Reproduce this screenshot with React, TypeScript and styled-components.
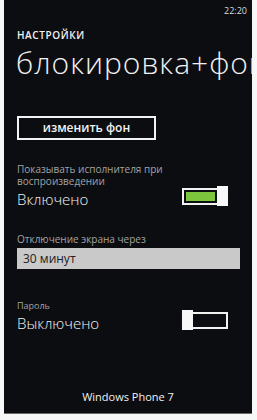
import styled, { createGlobalStyle } from 'styled-components';

const GlobalStyle = createGlobalStyle`
  html, body {
    margin: 0;
    padding: 0;
    background: #f7f7f7;
  }
  body {
    font-family: 'Open Sans', 'Noto Sans', sans-serif;
  }
`;

const Screen = styled.div`
  box-sizing: border-box;
  margin-left: 4px;
  width: 248px;
  height: 414px;
  background: #0b0d11;
  color: #f2f2f2;
  display: flex;
  flex-direction: column;
  padding: 0 12px 9px 13px;
  overflow: hidden;
  border-bottom: 1px solid #6a6a6a;
`;

const StatusBar = styled.div`
  display: flex;
  justify-content: flex-end;
  margin-right: -7px;
  padding-top: 5px;
  font-size: 9px;
  line-height: 12px;
  color: #d8d8d8;
`;

const AppLabel = styled.div`
  margin-top: 12px;
  font-size: 10px;
  line-height: 12px;
  font-weight: 600;
  letter-spacing: 0.6px;
`;

const PageTitle = styled.h1`
  margin: 5px -20px 0 -1px;
  font-size: 30px;
  line-height: 34px;
  font-weight: 300;
  letter-spacing: 1px;
  white-space: nowrap;
  overflow: hidden;
`;

const OutlineButton = styled.button`
  box-sizing: border-box;
  margin-top: 36px;
  width: 139px;
  height: 24px;
  border: 2px solid #f2f2f2;
  background: transparent;
  color: #f2f2f2;
  font-family: inherit;
  font-size: 12px;
  font-weight: 600;
  line-height: 18px;
  padding: 0;
`;

const Setting = styled.section<{ $gap: number }>`
  margin-top: ${(p) => p.$gap}px;
  display: flex;
  flex-direction: column;
`;

const Caption = styled.div<{ $small?: boolean }>`
  font-size: ${(p) => (p.$small ? 9 : 10)}px;
  line-height: 12px;
  color: #a3a3a3;
`;

const ValueRow = styled.div<{ $gap: number }>`
  margin-top: ${(p) => p.$gap}px;
  display: flex;
  justify-content: space-between;
  align-items: flex-start;
`;

const Value = styled.div`
  font-size: 15px;
  line-height: 20px;
  font-weight: 300;
`;

const Toggle = styled.div`
  display: flex;
  align-items: center;
  margin: -3px 12px 0 0;
  width: 46px;
  height: 20px;
`;

const Track = styled.div<{ $on: boolean }>`
  box-sizing: border-box;
  flex: 1;
  height: 17px;
  border: 2px solid #f2f2f2;
  padding: 2px;
  display: flex;
  order: ${(p) => (p.$on ? 0 : 1)};
  ${(p) => (p.$on ? 'margin-right: -2px;' : 'margin-left: -2px;')}
`;

const Fill = styled.div`
  flex: 1;
  background: #7dc53c;
`;

const Thumb = styled.div`
  width: 11px;
  height: 20px;
  background: #f7f7f7;
  position: relative;
`;

const Picker = styled.div`
  box-sizing: border-box;
  margin-top: 3px;
  height: 21px;
  background: #c9c9c9;
  color: #202020;
  font-size: 12px;
  line-height: 21px;
  padding-left: 6px;
`;

const Footer = styled.div`
  margin-top: auto;
  text-align: center;
  font-size: 11px;
  line-height: 14px;
  margin-left: -1px;
`;

function Switch({ on }: { on: boolean }) {
  return (
    <Toggle>
      <Track $on={on}>{on && <Fill />}</Track>
      <Thumb />
    </Toggle>
  );
}

export default function App() {
  return (
    <>
      <GlobalStyle />
      <Screen>
        <StatusBar>22:20</StatusBar>
        <AppLabel>НАСТРОЙКИ</AppLabel>
        <PageTitle>блокировка+фон</PageTitle>
        <OutlineButton>изменить фон</OutlineButton>

        <Setting $gap={23}>
          <Caption>
            Показывать исполнителя при
            <br />
            воспроизведении
          </Caption>
          <ValueRow $gap={2}>
            <Value>Включено</Value>
            <Switch on />
          </ValueRow>
        </Setting>

        <Setting $gap={24}>
          <Caption>Отключение экрана через</Caption>
          <Picker>30 минут</Picker>
        </Setting>

        <Setting $gap={31}>
          <Caption $small>Пароль</Caption>
          <ValueRow $gap={1}>
            <Value>Выключено</Value>
            <Switch on={false} />
          </ValueRow>
        </Setting>

        <Footer>Windows Phone 7</Footer>
      </Screen>
    </>
  );
}
